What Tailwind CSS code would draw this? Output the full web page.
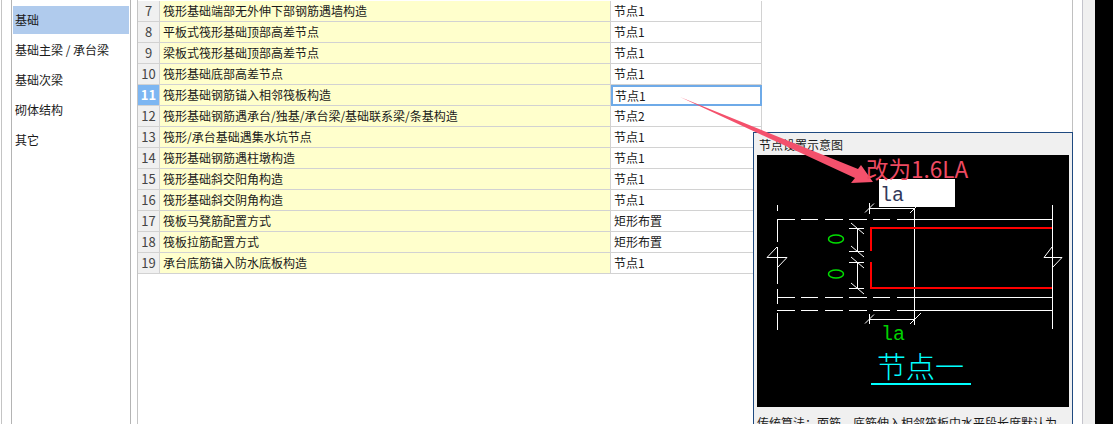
<!doctype html>
<html lang="zh">
<head>
<meta charset="utf-8">
<script src="https://cdn.jsdelivr.net/npm/@tailwindcss/browser@4"></script>
</head>
<body class="bg-white">
<div class="relative flex w-[1113px] h-[424px] overflow-hidden bg-white text-[12px] leading-[20px] text-[#1a1a1a] font-['Noto_Sans_CJK_SC','Liberation_Sans',sans-serif]">
  <div class="w-[12px] shrink-0 border-r border-[#b4b4b4]"><div class="ml-[1px] w-[1px] h-full bg-[#c4c4c4]"></div></div>
  <nav class="w-[119px] shrink-0 border-r border-[#b4b4b4] pt-[6px] pl-[1px] pr-[1px] flex flex-col gap-[2px]">
    <div class="h-[28px] bg-[#b0cbed] pl-[2px] flex items-center">基础</div>
    <div class="h-[28px] pl-[2px] flex items-center">基础主梁 / 承台梁</div>
    <div class="h-[28px] pl-[2px] flex items-center">基础次梁</div>
    <div class="h-[28px] pl-[2px] flex items-center">砌体结构</div>
    <div class="h-[28px] pl-[2px] flex items-center">其它</div>
  </nav>
  <div class="w-[6px] shrink-0"></div>
  <main class="w-[936px] shrink-0 border-l border-r border-l-[#c4c4c4] border-r-[#c0c0c0] pt-[1px]">
    <div class="w-[624px] grid grid-cols-[22px_451px_151px] auto-rows-[21px]">
      <div class="bg-[#f0f0f0] border-r border-b border-[#d2d2d2] flex items-center justify-center text-[#444] text-[13px]">7</div><div class="bg-[#ffffcc] border-r border-b border-[#d2d2d2] pl-[3px] flex items-center">筏形基础端部无外伸下部钢筋遇墙构造</div><div class="border-r border-b border-[#d2d2d2] pl-[3px] flex items-center">节点1</div>
      <div class="bg-[#f0f0f0] border-r border-b border-[#d2d2d2] flex items-center justify-center text-[#444] text-[13px]">8</div><div class="bg-[#ffffcc] border-r border-b border-[#d2d2d2] pl-[3px] flex items-center">平板式筏形基础顶部高差节点</div><div class="border-r border-b border-[#d2d2d2] pl-[3px] flex items-center">节点1</div>
      <div class="bg-[#f0f0f0] border-r border-b border-[#d2d2d2] flex items-center justify-center text-[#444] text-[13px]">9</div><div class="bg-[#ffffcc] border-r border-b border-[#d2d2d2] pl-[3px] flex items-center">梁板式筏形基础顶部高差节点</div><div class="border-r border-b border-[#d2d2d2] pl-[3px] flex items-center">节点1</div>
      <div class="bg-[#f0f0f0] border-r border-b border-[#d2d2d2] flex items-center justify-center text-[#444] text-[13px]">10</div><div class="bg-[#ffffcc] border-r border-b border-[#d2d2d2] pl-[3px] flex items-center">筏形基础底部高差节点</div><div class="border-r border-b border-[#d2d2d2] pl-[3px] flex items-center">节点1</div>
      <div class="bg-[#7db6f2] border-r border-b border-[#d2d2d2] flex items-center justify-center text-white font-bold text-[13px]">11</div><div class="bg-[#ffffcc] border-r border-b border-[#d2d2d2] pl-[3px] flex items-center">筏形基础钢筋锚入相邻筏板构造</div><div class="border-2 border-[#6eaae8] pl-[2px] flex items-center">节点1</div>
      <div class="bg-[#f0f0f0] border-r border-b border-[#d2d2d2] flex items-center justify-center text-[#444] text-[13px]">12</div><div class="bg-[#ffffcc] border-r border-b border-[#d2d2d2] pl-[3px] flex items-center">筏形基础钢筋遇承台/独基/承台梁/基础联系梁/条基构造</div><div class="border-r border-b border-[#d2d2d2] pl-[3px] flex items-center">节点2</div>
      <div class="bg-[#f0f0f0] border-r border-b border-[#d2d2d2] flex items-center justify-center text-[#444] text-[13px]">13</div><div class="bg-[#ffffcc] border-r border-b border-[#d2d2d2] pl-[3px] flex items-center">筏形/承台基础遇集水坑节点</div><div class="border-r border-b border-[#d2d2d2] pl-[3px] flex items-center">节点1</div>
      <div class="bg-[#f0f0f0] border-r border-b border-[#d2d2d2] flex items-center justify-center text-[#444] text-[13px]">14</div><div class="bg-[#ffffcc] border-r border-b border-[#d2d2d2] pl-[3px] flex items-center">筏形基础钢筋遇柱墩构造</div><div class="border-r border-b border-[#d2d2d2] pl-[3px] flex items-center">节点1</div>
      <div class="bg-[#f0f0f0] border-r border-b border-[#d2d2d2] flex items-center justify-center text-[#444] text-[13px]">15</div><div class="bg-[#ffffcc] border-r border-b border-[#d2d2d2] pl-[3px] flex items-center">筏形基础斜交阳角构造</div><div class="border-r border-b border-[#d2d2d2] pl-[3px] flex items-center">节点1</div>
      <div class="bg-[#f0f0f0] border-r border-b border-[#d2d2d2] flex items-center justify-center text-[#444] text-[13px]">16</div><div class="bg-[#ffffcc] border-r border-b border-[#d2d2d2] pl-[3px] flex items-center">筏形基础斜交阴角构造</div><div class="border-r border-b border-[#d2d2d2] pl-[3px] flex items-center">节点1</div>
      <div class="bg-[#f0f0f0] border-r border-b border-[#d2d2d2] flex items-center justify-center text-[#444] text-[13px]">17</div><div class="bg-[#ffffcc] border-r border-b border-[#d2d2d2] pl-[3px] flex items-center">筏板马凳筋配置方式</div><div class="border-r border-b border-[#d2d2d2] pl-[3px] flex items-center">矩形布置</div>
      <div class="bg-[#f0f0f0] border-r border-b border-[#d2d2d2] flex items-center justify-center text-[#444] text-[13px]">18</div><div class="bg-[#ffffcc] border-r border-b border-[#d2d2d2] pl-[3px] flex items-center">筏板拉筋配置方式</div><div class="border-r border-b border-[#d2d2d2] pl-[3px] flex items-center">矩形布置</div>
      <div class="bg-[#f0f0f0] border-r border-b border-[#d2d2d2] flex items-center justify-center text-[#444] text-[13px]">19</div><div class="bg-[#ffffcc] border-r border-b border-[#d2d2d2] pl-[3px] flex items-center">承台底筋锚入防水底板构造</div><div class="border-r border-b border-[#d2d2d2] pl-[3px] flex items-center">节点1</div>
    </div>
  </main>
  <div class="w-[10px] shrink-0 border-r border-[#c4c4cc]"></div>
  <div class="w-[12px] shrink-0 bg-[#f0f0f0]"></div>
  <div class="flex-1 bg-black"></div>

  <section class="absolute left-[753px] top-[132px] w-[320px] h-[310px] bg-[#f0f0f0] border border-[#1f4a80] px-[3px]">
    <div class="h-[22px] pl-[2px] leading-[24px]">节点设置示意图</div>
    <svg class="block w-[312px] h-[252px] bg-black" viewBox="757 155 312 252" shape-rendering="crispEdges">
      <rect x="879" y="179" width="76" height="28" fill="#fff"/>
      <text x="880" y="201" font-family="Liberation Mono, monospace" font-size="20" fill="#33395a" shape-rendering="auto">la</text>
      <g stroke="#fff" fill="none" stroke-width="1">
        <path d="M777.5 205V211M777.5 219V242M777.5 247V284M777.5 289V304M777.5 313V330"/>
        <path d="M1052.5 205V329M914.5 208V325"/>
        <path d="M777 219.5H1052" />
        <path d="M777 297.5H1052M777 310.5H1052"/>
        <path d="M869 208.5H915M869.5 203V214M869 319.5H915M869.5 314V324"/>
        <path d="M857.5 228V251M857.5 262V288M849 228.5H864M849 251.5H864M849 262.5H864M849 288.5H864"/>
      </g>
      <g stroke="#000" stroke-width="3">
        <path d="M795 219.5H801M818 219.5H825M843 219.5H849M867 219.5H873M890 219.5H897"/>
        <path d="M795 297.5H801M818 297.5H825M843 297.5H849M867 297.5H873M890 297.5H897"/>
        <path d="M795 310.5H801M818 310.5H825M843 310.5H849M867 310.5H873M890 310.5H897"/>
      </g>
      <g stroke="#fff" fill="none" stroke-width="1" shape-rendering="auto">
        <path d="M777 247L767 257.5H787L777 268M1052 247L1044 257.5H1062L1052 268"/>
        <path d="M865 212.5L874 203.5M910 213L919 204M865 323.5L874 314.5M910 324L921 313"/>
        <path d="M851 223L864 234M851 246L864 257M851 257L864 268M851 283L864 294"/>
      </g>
      <g stroke="#ff0000" fill="none" stroke-width="2">
        <path d="M1052 228H871V251M871 262V288H1052"/>
      </g>
      <g stroke="#00e000" fill="none" stroke-width="1.5" shape-rendering="auto">
        <ellipse cx="836" cy="239" rx="7.5" ry="4"/>
        <ellipse cx="836" cy="274" rx="7.5" ry="4"/>
      </g>
      <text x="881" y="340" font-family="Liberation Mono, monospace" font-size="20" fill="#00d000" shape-rendering="auto">la</text>
      <text x="877" y="378" font-family="Noto Sans CJK SC, sans-serif" font-weight="300" font-size="29" fill="#00ffff" shape-rendering="auto">节点一</text>
      <rect x="871" y="383" width="100" height="2" fill="#00ffff"/>
    </svg>
    <div class="mt-[6px] whitespace-nowrap leading-[20px]">传统算法：面筋、底筋伸入相邻筏板中水平段长度默认为</div>
  </section>

  <svg class="absolute left-0 top-0 w-[1113px] h-[424px] pointer-events-none" viewBox="0 0 1113 424">
    <polygon points="680,97 858,169 861,165 873,182 851,183 855,178" fill="#f4516c"/>
  </svg>
  <div class="absolute left-[866px] top-[154px] text-[22.5px] leading-[28px] text-[#ee4a62]">改为1.6LA</div>
</div>
</body>
</html>
